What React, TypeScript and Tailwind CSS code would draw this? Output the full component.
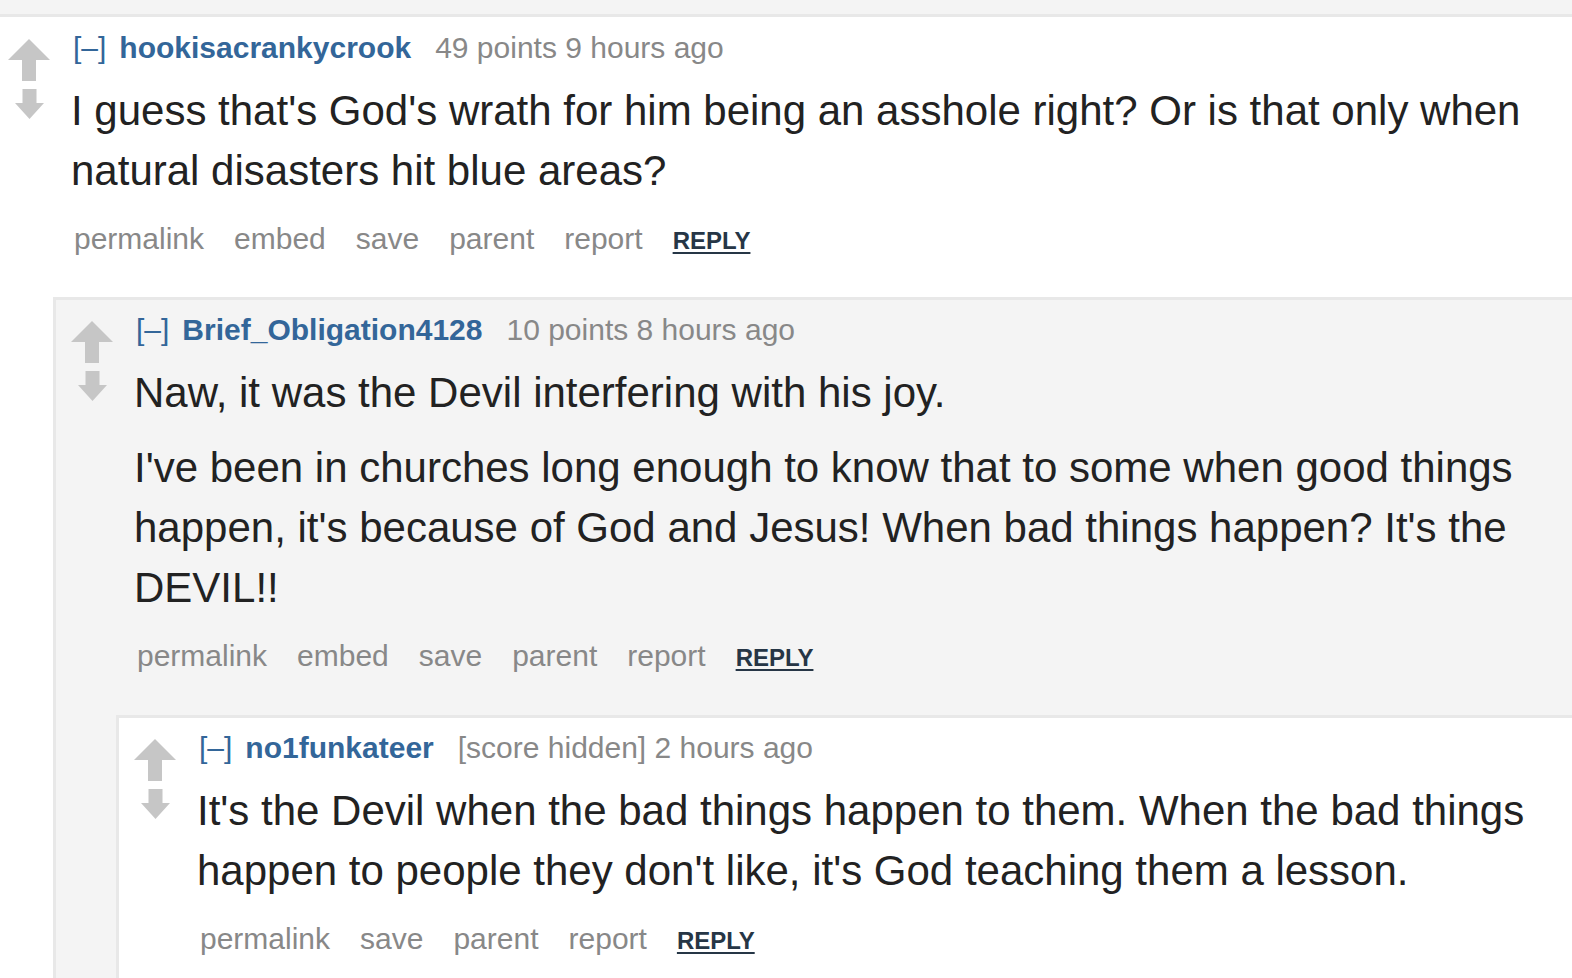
import React from "react";

const FONT = { fontFamily: '"Liberation Sans", Arial, sans-serif' };

function Arrows() {
  return (
    <div className="flex w-[42px] flex-col items-center blur-[0.4px]">
      <svg width="42" height="42" viewBox="0 0 42 42">
        <path d="M21 0 L42 21 L28 21 L28 42 L14 42 L14 21 L0 21 Z" fill="#c6c6c6" />
      </svg>
      <svg width="29" height="30" viewBox="0 0 29 30" className="mt-[8px]">
        <path d="M7.5 0 L21.5 0 L21.5 14 L29 14 L14.5 30 L0 14 L7.5 14 Z" fill="#c6c6c6" />
      </svg>
    </div>
  );
}

function Header({ user, meta }: { user: string; meta: string }) {
  return (
    <div className="flex items-baseline whitespace-nowrap pl-[2px] text-[30px] leading-[36px]">
      <span className="text-[#369]">[–]</span>
      <span className="ml-[13px] font-bold text-[#336699]">{user}</span>
      <span className="ml-[24px] text-[#888]">{meta}</span>
    </div>
  );
}

function Actions({ embed }: { embed: boolean }) {
  const items = embed
    ? ["permalink", "embed", "save", "parent", "report"]
    : ["permalink", "save", "parent", "report"];
  return (
    <div className="mt-[20px] flex items-baseline gap-[30px] pl-[3px] text-[30px] leading-[36px] text-[#888]">
      {items.map((t) => (
        <span key={t}>{t}</span>
      ))}
      <span className="text-[24px] font-bold text-[#263646] underline decoration-[2px] underline-offset-[3px]">
        REPLY
      </span>
    </div>
  );
}

function Body({ paras }: { paras: string[] }) {
  return (
    <div className="mt-[15px] pr-[10px] text-[42px] leading-[60px] text-[#222]">
      {paras.map((p, i) => (
        <p key={i} className={i < paras.length - 1 ? "mb-[15px]" : ""}>
          {p}
        </p>
      ))}
    </div>
  );
}

function Entry({
  user,
  meta,
  paras,
  embed,
}: {
  user: string;
  meta: string;
  paras: string[];
  embed: boolean;
}) {
  return (
    <div className="flex">
      <div className="w-[78px] shrink-0 pl-[15px] pt-[21px]">
        <Arrows />
      </div>
      <div className="min-w-0 flex-1 pt-[12px]">
        <Header user={user} meta={meta} />
        <Body paras={paras} />
        <Actions embed={embed} />
      </div>
    </div>
  );
}

export default function App() {
  return (
    <div className="h-[978px] w-full overflow-hidden bg-white" style={FONT}>
      <div className="h-[17px] border-b-[3px] border-[#e8e8e8] bg-[#f4f4f4]" />
      <div className="ml-[-7px] pt-[1px]">
        <Entry
          user="hookisacrankycrook"
          meta="49 points 9 hours ago"
          embed={true}
          paras={[
            "I guess that's God's wrath for him being an asshole right? Or is that only when natural disasters hit blue areas?",
          ]}
        />
        <div className="mt-[38px] pl-[60px]">
          <div className="border-l-[3px] border-t-[3px] border-[#e8e8e8] bg-[#f4f4f4]">
            <Entry
              user="Brief_Obligation4128"
              meta="10 points 8 hours ago"
              embed={true}
              paras={[
                "Naw, it was the Devil interfering with his joy.",
                "I've been in churches long enough to know that to some when good things happen, it's because of God and Jesus! When bad things happen? It's the DEVIL!!",
              ]}
            />
            <div className="mt-[39px] pl-[60px]">
              <div className="border-l-[3px] border-t-[3px] border-[#e8e8e8] bg-white pb-[40px]">
                <Entry
                  user="no1funkateer"
                  meta="[score hidden] 2 hours ago"
                  embed={false}
                  paras={[
                    "It's the Devil when the bad things happen to them. When the bad things happen to people they don't like, it's God teaching them a lesson.",
                  ]}
                />
              </div>
            </div>
          </div>
        </div>
      </div>
    </div>
  );
}
